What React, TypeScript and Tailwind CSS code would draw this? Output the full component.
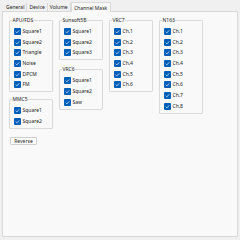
import React from 'react';

type Group = { title: string; items: string[] };

const font = { fontFamily: '"Segoe UI", "Noto Sans", "Liberation Sans", sans-serif' };

function Check({ label }: { label: string }) {
    return (
        <div className="flex items-center h-[7px] gap-[1.5px]">
            <div className="w-[7px] h-[7px] rounded-[1px] bg-[#005fb8] flex items-center justify-center shrink-0">
                <svg width="7" height="7" viewBox="0 0 7 7">
                    <polyline points="1.8,3.7 2.9,4.8 5.2,2.4" fill="none" stroke="white" strokeWidth="0.7" />
                </svg>
            </div>
            <span className="text-[5px] leading-[7px] text-[#1b1b1b]">{label}</span>
        </div>
    );
}

function GroupBox({ group }: { group: Group }) {
    return (
        <fieldset className="w-[44px] border border-[#dadada] rounded-[1px] pl-[4px] pt-[5px] pb-[3px]">
            <legend className="text-[5px] leading-[6px] text-[#1b1b1b] px-[0.5px] -ml-[2px]">{group.title}</legend>
            <div className="flex flex-col gap-[3.67px]">
                {group.items.map((it) => (
                    <Check key={it} label={it} />
                ))}
            </div>
        </fieldset>
    );
}

const ch = (n: number) => Array.from({ length: n }, (_, i) => `Ch.${i + 1}`);

function App() {
    const tabs = ['General', 'Device', 'Volume'];
    return (
        <div className="w-[240px] h-[240px] bg-[#f0f0f0] flex flex-col px-[2px] pt-[1px] pb-[3px]" style={font}>
            <div className="flex items-end h-[10px] pl-[2px]">
                {tabs.map((t) => (
                    <div key={t} className="h-[8px] px-[2px] border-r border-[#d9d9d9] text-[5px] leading-[8px] text-[#1b1b1b]">
                        {t}
                    </div>
                ))}
                <div className="h-[10px] px-[2.5px] -mb-px relative z-10 bg-[#f9f9f9] border border-b-0 border-[#d9d9d9] text-[5px] leading-[10px] text-[#1b1b1b]">
                    Channel Mask
                </div>
            </div>
            <div className="flex-1 bg-[#f9f9f9] border border-[#d9d9d9] pl-[6px] pt-[5px] flex items-start gap-[6px]">
                <div className="flex flex-col items-start gap-[4px]">
                    <GroupBox group={{ title: 'APU/FDS', items: ['Square1', 'Square2', 'Triangle', 'Noise', 'DPCM', 'FM'] }} />
                    <GroupBox group={{ title: 'MMC5', items: ['Square1', 'Square2'] }} />
                    <button className="ml-[1px] mt-[4px] w-[27px] h-[8px] border border-[#d0d0d0] rounded-[1px] bg-[#fdfdfd] text-[5px] leading-[6px] text-[#1b1b1b]">
                        Reverse
                    </button>
                </div>
                <div className="flex flex-col gap-[6px]">
                    <GroupBox group={{ title: 'Sunsoft5B', items: ['Square1', 'Square2', 'Square3'] }} />
                    <GroupBox group={{ title: 'VRC6', items: ['Square1', 'Square2', 'Saw'] }} />
                </div>
                <GroupBox group={{ title: 'VRC7', items: ch(6) }} />
                <GroupBox group={{ title: 'N163', items: ch(8) }} />
            </div>
        </div>
    );
}

export default App;
